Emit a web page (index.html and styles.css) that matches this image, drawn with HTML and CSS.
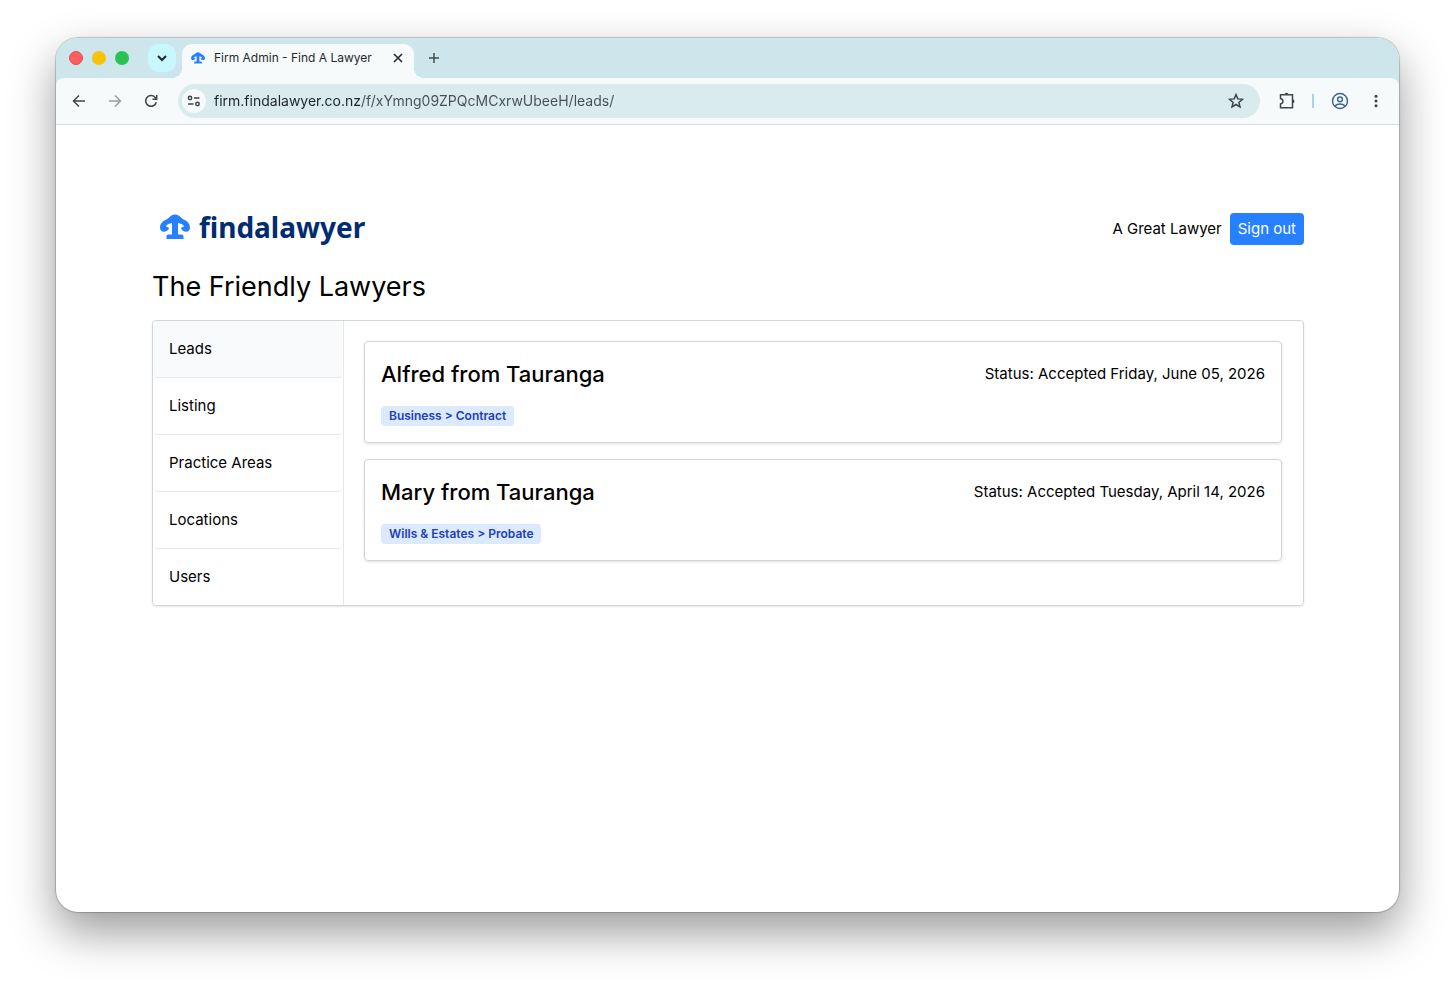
FILE: index.html
```html
<!DOCTYPE html>
<html lang="en">
<head>
    <meta charset="UTF-8">
    <meta name="viewport" content="width=device-width, initial-scale=1.0">
    <title>Firm Admin - Find A Lawyer</title>
    <link rel="stylesheet" href="styles.css">
</head>
<body>

    <svg class="sprite" aria-hidden="true">
        <symbol id="scales" viewBox="0 0 30 26">
            <path d="M15 .5c1.600 0 2.900.5 4.200 1.500l3.500 3C27 6.500 30 9.800 30 13.500c0 2.600-1.400 4.200-3.800 4.200-2.300 0-4.400-1.200-5.400-3.600l3.400-1.900c-1.500-1.800-3.500-2.800-6.200-3.200v11.500h3.500c1.300 0 2 .7 2 2v2.500h-17v-2.500c0-1.300.7-2 2-2H12V9c-2.700.4-4.700 1.400-6.200 3.200l3.400 1.900c-1 2.400-3.100 3.600-5.400 3.600C1.400 17.700 0 16.100 0 13.500 0 9.800 3 6.500 7.300 5l3.500-3C12.100 1 13.400.5 15 .5z"/>
        </symbol>
    </svg>

    <div class="window">
        <div class="tab-bar">
            <div class="lights">
                <button class="light red" aria-label="Close window"></button>
                <button class="light yellow" aria-label="Minimize"></button>
                <button class="light green" aria-label="Zoom"></button>
            </div>
            <button class="tab-search" aria-label="Search tabs">
                <svg width="12" height="12" viewBox="0 0 12 12"><path d="M2 4l4 4 4-4"/></svg>
            </button>
            <div class="tab">
                <svg class="favicon" width="14" height="12"><use href="#scales"/></svg>
                <span class="tab-title">Firm Admin - Find A Lawyer</span>
                <button class="tab-close" aria-label="Close tab">
                    <svg width="12" height="12" viewBox="0 0 12 12"><path d="M2 2l8 8M10 2l-8 8"/></svg>
                </button>
            </div>
            <button class="new-tab" aria-label="New tab">
                <svg width="12" height="12" viewBox="0 0 12 12"><path d="M6 1v10M1 6h10"/></svg>
            </button>
        </div>

        <div class="toolbar">
            <button class="tool" aria-label="Back">
                <svg width="14" height="14" viewBox="0 0 14 14"><path d="M13 7H2M7 1.500L1.500 7 7 12.500"/></svg>
            </button>
            <button class="tool faded" aria-label="Forward">
                <svg width="14" height="14" viewBox="0 0 14 14"><path d="M1 7h11M7 1.500L12.500 7 7 12.500"/></svg>
            </button>
            <button class="tool" aria-label="Reload">
                <svg width="14" height="14" viewBox="0 0 14 14"><path d="M12.300 8.200A5.400 5.400 0 1 1 11 3.200L12.500 4.700M12.700 1v4.200H8.500"/></svg>
            </button>
            <div class="address">
                <button class="site-info" aria-label="Site information">
                    <svg width="14" height="12" viewBox="0 0 14 12"><circle cx="3" cy="3" r="1.700"/><path d="M7 3h5.500M1 9h5.500"/><circle cx="10.500" cy="9" r="1.700"/></svg>
                </button>
                <input class="url" type="text" aria-label="Address" value="firm.findalawyer.co.nz/f/xYmng09ZPQcMCxrwUbeeH/leads/">
                <button class="tool" aria-label="Bookmark">
                    <svg width="16" height="16" viewBox="0 0 16 16"><path d="M8 1.600l1.800 4.300 4.700.4-3.600 3.100 1.100 4.600L8 11.500 4 14l1.100-4.600L1.500 6.300l4.700-.4z"/></svg>
                </button>
            </div>
            <button class="tool extensions" aria-label="Extensions">
                <svg width="18" height="18" viewBox="0 0 18 18"><path d="M2.500 2.800h12v13h-12v-3.800c3.200-.6 3.200-4.800 0-5.400z"/><path class="solid" d="M6.500 2.800a2 2 0 0 1 4 0zM14.500 7.300a2 2 0 0 1 0 4z"/></svg>
            </button>
            <span class="divider"></span>
            <button class="tool profile" aria-label="Profile">
                <svg width="18" height="18" viewBox="0 0 18 18"><circle cx="9" cy="9" r="7.500"/><circle cx="9" cy="7.300" r="2.400"/><path d="M3.800 14c2.800-2.700 7.600-2.700 10.400 0"/></svg>
            </button>
            <button class="tool" aria-label="Menu">
                <svg width="4" height="14" viewBox="0 0 4 14"><g class="solid"><circle cx="2" cy="2.300" r="1.500"/><circle cx="2" cy="7" r="1.500"/><circle cx="2" cy="11.700" r="1.500"/></g></svg>
            </button>
        </div>

        <div class="page">
            <header class="header">
                <a class="logo" href="#">
                    <svg width="30" height="26"><use href="#scales"/></svg>
                    <span>findalawyer</span>
                </a>
                <div class="account">
                    <span>A Great Lawyer</span>
                    <button class="sign-out">Sign out</button>
                </div>
            </header>

            <h1>The Friendly Lawyers</h1>

            <div class="panel">
                <nav class="menu">
                    <a class="active" href="#">Leads</a>
                    <a href="#">Listing</a>
                    <a href="#">Practice Areas</a>
                    <a href="#">Locations</a>
                    <a href="#">Users</a>
                </nav>
                <main class="leads">
                    <article class="lead">
                        <div class="lead-top">
                            <h2>Alfred from Tauranga</h2>
                            <span>Status: Accepted Friday, June 05, 2026</span>
                        </div>
                        <span class="badge">Business &gt; Contract</span>
                    </article>
                    <article class="lead">
                        <div class="lead-top">
                            <h2>Mary from Tauranga</h2>
                            <span>Status: Accepted Tuesday, April 14, 2026</span>
                        </div>
                        <span class="badge">Wills &amp; Estates &gt; Probate</span>
                    </article>
                </main>
            </div>
        </div>
    </div>

</body>
</html>
```
FILE: styles.css
```css
* {
    box-sizing: border-box;
}
body {
    margin: 0;
    padding: 38px 56px 74px;
    min-height: 100vh;
    display: flex;
    background: #fff;
    color: #000;
    font: 15px/24px Inter, "Liberation Sans", sans-serif;
}
button {
    border: 0;
    padding: 0;
    background: none;
    color: inherit;
    font: inherit;
    display: flex;
    align-items: center;
    justify-content: center;
    flex-shrink: 0;
}
a {
    color: inherit;
    text-decoration: none;
}
.sprite {
    position: absolute;
    width: 0;
    height: 0;
}

/* Browser window */
.window {
    flex: 1;
    min-width: 0;
    display: flex;
    flex-direction: column;
    overflow: hidden;
    background: #fff;
    border-radius: 22px;
    box-shadow: 0 0 1px 1px rgba(0, 0, 0, 0.2), 0 20px 46px rgba(0, 0, 0, 0.4);
}
.tab-bar {
    position: relative;
    z-index: 1;
    display: flex;
    align-items: center;
    height: 40px;
    padding-left: 13px;
    background: #cde6eb;
}
.lights {
    display: flex;
    gap: 9px;
    margin-right: 19px;
}
.light {
    width: 14px;
    height: 14px;
    border-radius: 50%;
}
.red {
    background: #ff5f5f;
    border: 1px solid #f0464b;
}
.yellow {
    background: #f9c20a;
}
.green {
    background: #2ac352;
}
.tab-search {
    width: 28px;
    height: 28px;
    border-radius: 10px;
    background: #c9f7fe;
}
.tab-bar svg {
    fill: none;
    stroke: #1f2a2c;
    stroke-width: 2;
}
.tab {
    position: relative;
    display: flex;
    align-items: center;
    align-self: flex-end;
    width: 232px;
    height: 34px;
    margin-left: 6px;
    padding: 0 10px 6px 9px;
    background: #f6fafb;
    border-radius: 10px 10px 0 0;
}
.tab::before,
.tab::after {
    content: "";
    position: absolute;
    bottom: 0;
    width: 10px;
    height: 10px;
}
.tab::before {
    right: 100%;
    background: radial-gradient(circle at 0 0, transparent 10px, #f6fafb 10px);
}
.tab::after {
    left: 100%;
    background: radial-gradient(circle at 100% 0, transparent 10px, #f6fafb 10px);
}
.tab .favicon {
    fill: #2680ff;
    stroke: none;
}
.tab-title {
    flex: 1;
    margin-left: 9px;
    font-size: 12px;
    line-height: 20px;
    color: #1f2a2c;
    white-space: nowrap;
}
.tab .tab-close svg {
    stroke-width: 1.6;
}
.new-tab {
    margin-left: 14px;
}
.tab-bar .new-tab svg {
    stroke: #444b4d;
    stroke-width: 1.5;
}
.toolbar {
    display: flex;
    align-items: center;
    height: 47px;
    padding: 0 14px;
    background: #f6fafb;
    border-bottom: 1px solid #d3e0e3;
    border-radius: 8px 8px 0 0;
    box-shadow: 0 -10px 0 0 #cde6eb;
}
.tool {
    width: 18px;
    height: 18px;
    margin-right: 18px;
}
.toolbar svg {
    fill: none;
    stroke: #3f4648;
    stroke-width: 1.5;
}
.toolbar .solid {
    fill: #3f4648;
    stroke: none;
}
.faded {
    opacity: 0.5;
}
.address {
    flex: 1;
    display: flex;
    align-items: center;
    height: 34px;
    padding-left: 4px;
    border-radius: 17px;
    background: #daebed;
}
.address .tool {
    margin-right: 15px;
}
.site-info {
    width: 24px;
    height: 24px;
    border-radius: 50%;
    background: #f6fafb;
}
.url {
    flex: 1;
    min-width: 0;
    margin-left: 8px;
    padding: 0;
    border: 0;
    outline: 0;
    /* host is darker than the path */
    background: linear-gradient(90deg, #1c2426 146px, #474f51 146px);
    background-clip: text;
    color: transparent;
    font: 14px/20px Inter, "Liberation Sans", sans-serif;
}
.extensions {
    margin: 0 16px 0 18px;
}
.divider {
    width: 2px;
    height: 14px;
    margin-right: 17px;
    background: #a9cffb;
}
.toolbar .profile svg {
    stroke: #3d6597;
}
.toolbar > .tool:last-child {
    margin-right: 0;
}

/* Firm admin page */
.page {
    padding: 88px 95px 0 96px;
}
.header {
    display: flex;
    align-items: center;
    justify-content: space-between;
    height: 32px;
}
.logo {
    display: flex;
    align-items: center;
    align-self: flex-start;
    gap: 9px;
    margin-left: 8px;
    color: #002c72;
    font: bold 28px/28px "Noto Sans", sans-serif;
}
.logo svg {
    fill: #2680ff;
}
.account {
    display: flex;
    align-items: center;
    gap: 8px;
}
.sign-out {
    height: 32px;
    padding: 0 8px;
    border-radius: 4px;
    background: #2680ff;
    color: #fff;
}
h1 {
    margin: 24px 0 15px;
    font-size: 27px;
    line-height: 36px;
    font-weight: 400;
}
.panel {
    display: flex;
    border: 1px solid #d1d5dc;
    border-radius: 4px;
    box-shadow: 0 1px 2px rgba(0, 0, 0, 0.1);
}
.menu {
    width: 191px;
    flex-shrink: 0;
    padding: 0 1px;
    border-right: 1px solid #e5e7eb;
}
.menu a {
    display: block;
    padding: 16px 15px;
    border-bottom: 1px solid #e5e7eb;
    border-radius: 4px;
}
.menu a:last-child {
    border-bottom: 0;
}
.menu .active {
    background: #f9fafc;
}
.leads {
    flex: 1;
    display: flex;
    flex-direction: column;
    gap: 16px;
    padding: 20px 21px 20px 20px;
}
.lead {
    padding: 16px;
    border: 1px solid #d1d5dc;
    border-radius: 4px;
    box-shadow: 0 1px 3px rgba(0, 0, 0, 0.12);
}
.lead-top {
    display: flex;
    align-items: center;
    justify-content: space-between;
    margin-bottom: 16px;
}
h2 {
    margin: 0;
    font-size: 22px;
    line-height: 32px;
    font-weight: 500;
}
.badge {
    display: block;
    width: fit-content;
    padding: 0 8px;
    border-radius: 4px;
    background: #dbeafe;
    color: #1d40b9;
    font-size: 12px;
    line-height: 20px;
    font-weight: 600;
}
```
